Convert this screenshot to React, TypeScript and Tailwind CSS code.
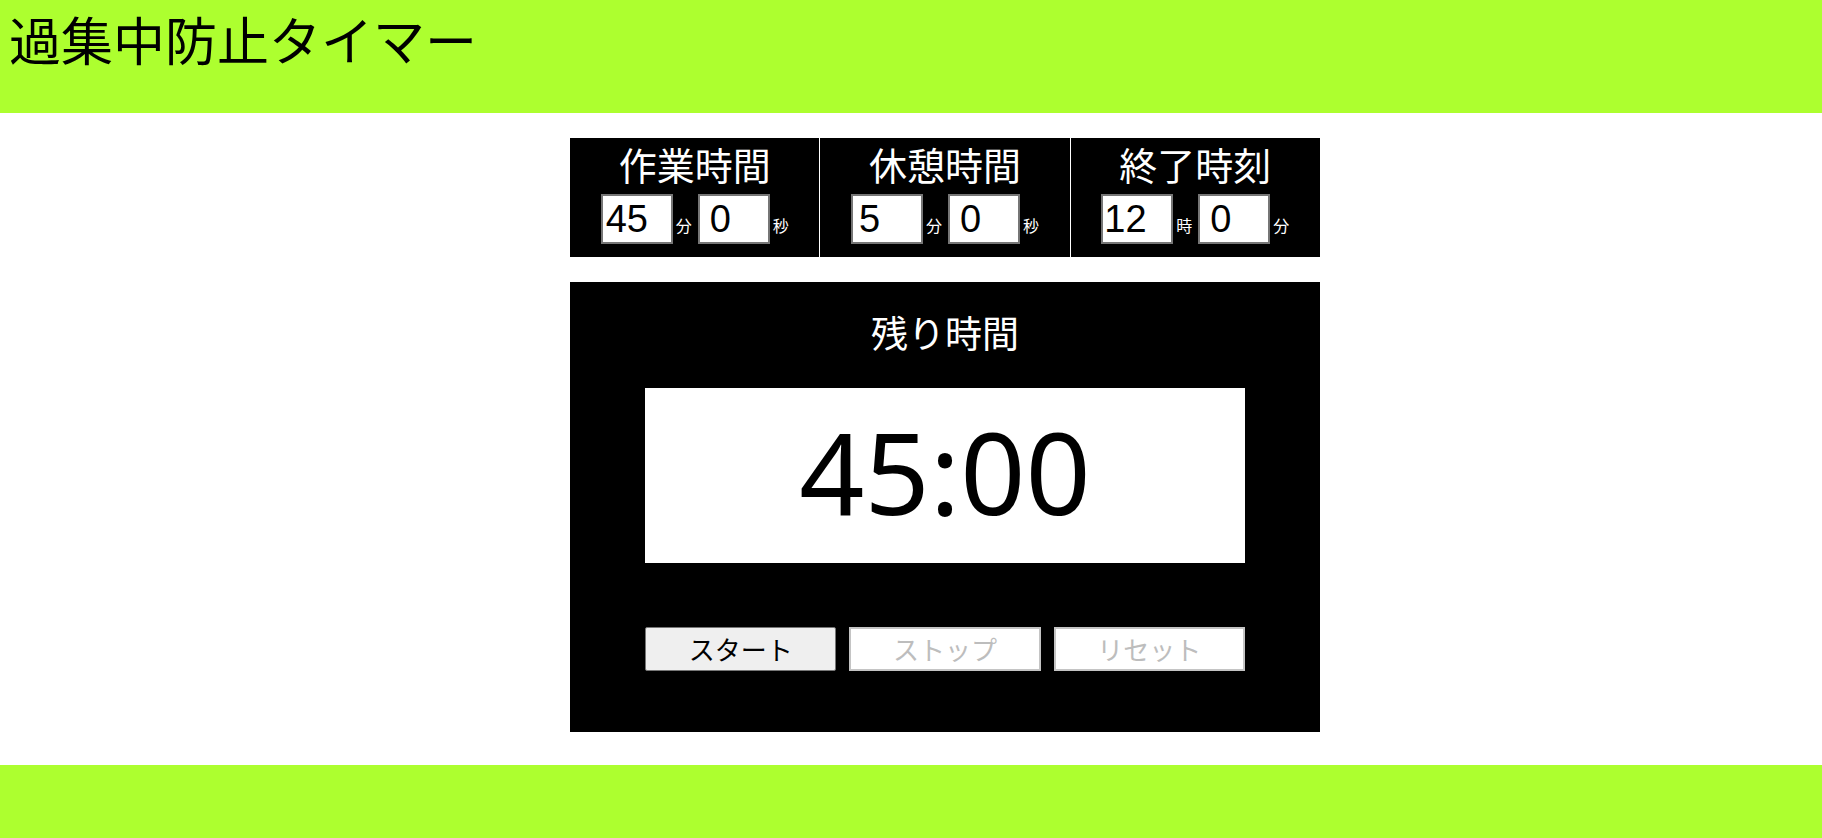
import React from "react";

const jp = "font-['Noto_Sans_CJK_JP','Noto_Sans',sans-serif]";

type Field = { value: string; unit: string; pad: string };

const settings: { title: string; fields: Field[] }[] = [
  {
    title: "作業時間",
    fields: [
      { value: "45", unit: "分", pad: "pl-[3px]" },
      { value: "0", unit: "秒", pad: "pl-[10px]" },
    ],
  },
  {
    title: "休憩時間",
    fields: [
      { value: "5", unit: "分", pad: "pl-[6px]" },
      { value: "0", unit: "秒", pad: "pl-[10px]" },
    ],
  },
  {
    title: "終了時刻",
    fields: [
      { value: "12", unit: "時", pad: "pl-[1px]" },
      { value: "0", unit: "分", pad: "pl-[10px]" },
    ],
  },
];

function SettingColumn({ title, fields }: { title: string; fields: Field[] }) {
  return (
    <div className="bg-black pt-[7px] pb-[13px] flex flex-col items-center">
      <h2 className={`${jp} text-white text-[38px] leading-[38px]`}>{title}</h2>
      <div className="mt-[11px] flex items-baseline">
        {fields.map((f, i) => (
          <div key={i} className={`flex items-baseline ${i > 0 ? "ml-[6px]" : ""}`}>
            <input
              readOnly
              value={f.value}
              className={`w-[72px] h-[50px] bg-white border-2 border-[#767676] ${f.pad} font-['Liberation_Sans',Arial,sans-serif] text-[38px] text-black outline-none`}
            />
            <span className={`${jp} ml-[3px] text-white text-[16px]`}>{f.unit}</span>
          </div>
        ))}
      </div>
    </div>
  );
}

export default function App() {
  return (
    <div className="min-h-[838px] bg-white flex flex-col">
      <header className="h-[113px] bg-[#adff2f] pl-[9px] pt-[13px]">
        <h1 className={`${jp} text-black text-[52px] leading-[52px]`}>過集中防止タイマー</h1>
      </header>

      <main className="flex flex-col items-center pl-[68px]">
        <section className="mt-[25px] w-[750px] grid grid-cols-3 gap-px bg-white">
          {settings.map((s) => (
            <SettingColumn key={s.title} title={s.title} fields={s.fields} />
          ))}
        </section>

        <section className="mt-[25px] w-[750px] h-[450px] bg-black flex flex-col items-center pt-[32px]">
          <h2 className={`${jp} text-white text-[37px] leading-[37px]`}>残り時間</h2>
          <div className="mt-[37px] w-[600px] h-[175px] bg-white flex items-center justify-center pb-[10px]">
            <span className="font-['Noto_Sans',sans-serif] text-[114px] leading-none text-black">45:00</span>
          </div>
          <div className="mt-[64px] w-[600px] grid grid-cols-3 gap-[13px]">
            <button className={`${jp} h-[44px] bg-[#efefef] border border-[#767676] rounded-[2px] text-black text-[26px] leading-none`}>
              スタート
            </button>
            <button disabled className={`${jp} h-[44px] bg-white border-2 border-[#c4c4c4] text-[#bdbdbd] text-[26px] leading-none`}>
              ストップ
            </button>
            <button disabled className={`${jp} h-[44px] bg-white border-2 border-[#c4c4c4] text-[#bdbdbd] text-[26px] leading-none`}>
              リセット
            </button>
          </div>
        </section>
      </main>

      <footer className="mt-[33px] flex-1 bg-[#adff2f]" />
    </div>
  );
}
